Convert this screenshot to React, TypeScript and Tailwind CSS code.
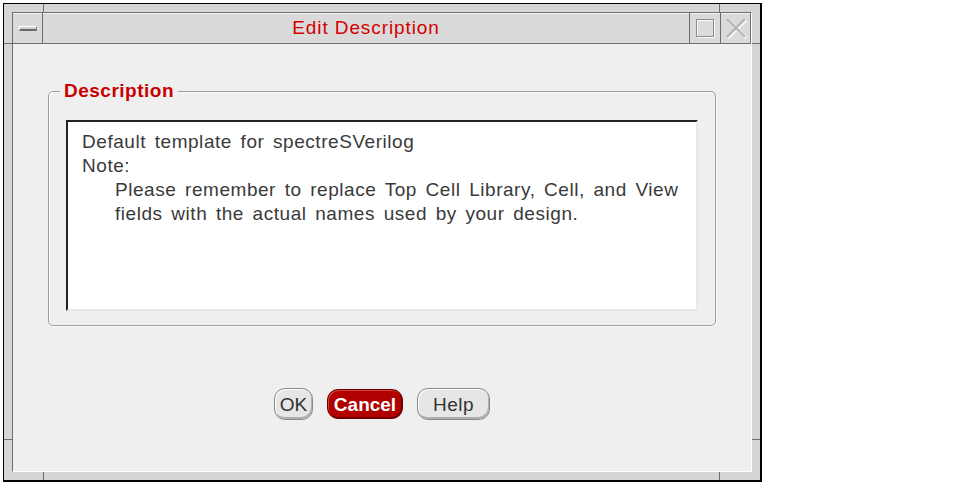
import React from "react";

function Notch({ className }: { className: string }) {
  return <div className={"absolute bg-[#6e6e6e] " + className} />;
}

export default function App() {
  return (
    <div className="w-[967px] h-[492px] bg-white pt-[3px] pl-[3px] font-['Liberation_Sans',Arial,sans-serif]">
      <div className="relative w-[759px] h-[479px] border-l border-t border-black border-r-[2px] border-b-[2px] bg-[#d6d6d6] p-[8px] flex flex-col">
        {/* resize handle separators */}
        <Notch className="left-[39px] top-0 w-px h-[8px]" />
        <Notch className="left-[715px] top-0 w-px h-[8px]" />
        <Notch className="left-0 top-[39px] w-[8px] h-px" />
        <Notch className="right-0 top-[39px] w-[8px] h-px" />
        <Notch className="left-[39px] bottom-0 w-px h-[8px]" />
        <Notch className="left-[715px] bottom-0 w-px h-[8px]" />
        <Notch className="left-0 top-[435px] w-[8px] h-px" />
        <Notch className="right-0 top-[435px] w-[8px] h-px" />

        <div className="flex-1 flex flex-col border-l border-t border-[#6e6e6e] border-r border-b border-r-white border-b-white">
          {/* title bar */}
          <div className="h-[31px] flex bg-[#dadada] border-b border-[#6e6e6e] shadow-[inset_0_1px_0_#f4f4f4]">
            <div className="w-[30px] flex items-center justify-center border-r border-[#6e6e6e]">
              <div className="w-[18px] h-[5px] bg-[#d0d0d0] border-t border-l border-white border-b-2 border-r border-b-[#6a6a6a] border-r-[#8a8a8a]" />
            </div>
            <div className="flex-1 flex items-center justify-center text-[#d40000] text-[19px] tracking-[0.9px] leading-none pb-[1px]">
              Edit Description
            </div>
            <div className="w-[31px] flex items-center justify-center border-l border-[#6e6e6e]">
              <div className="w-[18px] h-[18px] border border-[#8c8c8c] shadow-[inset_1px_1px_0_#f8f8f8,1px_1px_0_#f8f8f8] bg-[#dcdcdc]" />
            </div>
            <div className="w-[31px] flex items-center justify-center border-l border-r border-[#6e6e6e]">
              <svg width="24" height="22" viewBox="0 0 24 22">
                <path d="M3 2 L21 20 M21 2 L3 20" stroke="#fbfbfb" strokeWidth="3" transform="translate(1,1)" />
                <path d="M3 2 L21 20 M21 2 L3 20" stroke="#b4b4b4" strokeWidth="2.4" />
              </svg>
            </div>
          </div>

          {/* content */}
          <div className="flex-1 bg-[#efefef] flex flex-col px-[35px] pt-[47px]">
            <div className="relative h-[235px] border border-[#9c9c9c] rounded-[5px] shadow-[inset_1px_1px_0_#fbfbfb,1px_1px_0_#fbfbfb] px-[17px] pt-[28px]">
              <div className="absolute left-[11px] top-[-12px] px-[4px] bg-[#efefef] text-[#c80000] font-bold text-[19px] leading-[22px] tracking-[0.5px]">
                Description
              </div>
              <div className="h-[191px] bg-white border-t-[2px] border-l-[2px] border-[#222] border-r-[2px] border-b-[2px] border-r-[#e8e8e8] border-b-[#e8e8e8] pl-[14px] pt-[8px] text-[#3a3a3a] text-[19px] leading-[24px] tracking-[0.55px] [word-spacing:2.8px]">
                <div>Default template for spectreSVerilog</div>
                <div>Note:</div>
                <div className="pl-[33px]">Please remember to replace Top Cell Library, Cell, and View</div>
                <div className="pl-[33px]">fields with the actual names used by your design.</div>
              </div>
            </div>

            <div className="mt-[62px] flex justify-center items-center gap-[14px]">
              <button className="w-[39px] h-[32px] rounded-[11px] bg-[#e6e6e6] border border-[#8a8a8a] shadow-[inset_1px_1px_0_#ffffff,inset_-1px_-2px_0_#b0b0b0] text-[#333] text-[19px] leading-none flex items-center justify-center">
                OK
              </button>
              <button className="w-[76px] h-[30px] rounded-[11px] bg-[#b00000] border border-[#6a0000] shadow-[inset_1px_1px_0_#d84040,inset_-1px_-1px_0_#700000] text-white font-bold text-[19px] leading-none flex items-center justify-center">
                Cancel
              </button>
              <button className="w-[73px] h-[32px] rounded-[11px] bg-[#e6e6e6] border border-[#8a8a8a] shadow-[inset_1px_1px_0_#ffffff,inset_-1px_-2px_0_#b0b0b0] text-[#333] text-[19px] leading-none tracking-[0.5px] flex items-center justify-center">
                Help
              </button>
            </div>
          </div>
        </div>
      </div>
    </div>
  );
}
